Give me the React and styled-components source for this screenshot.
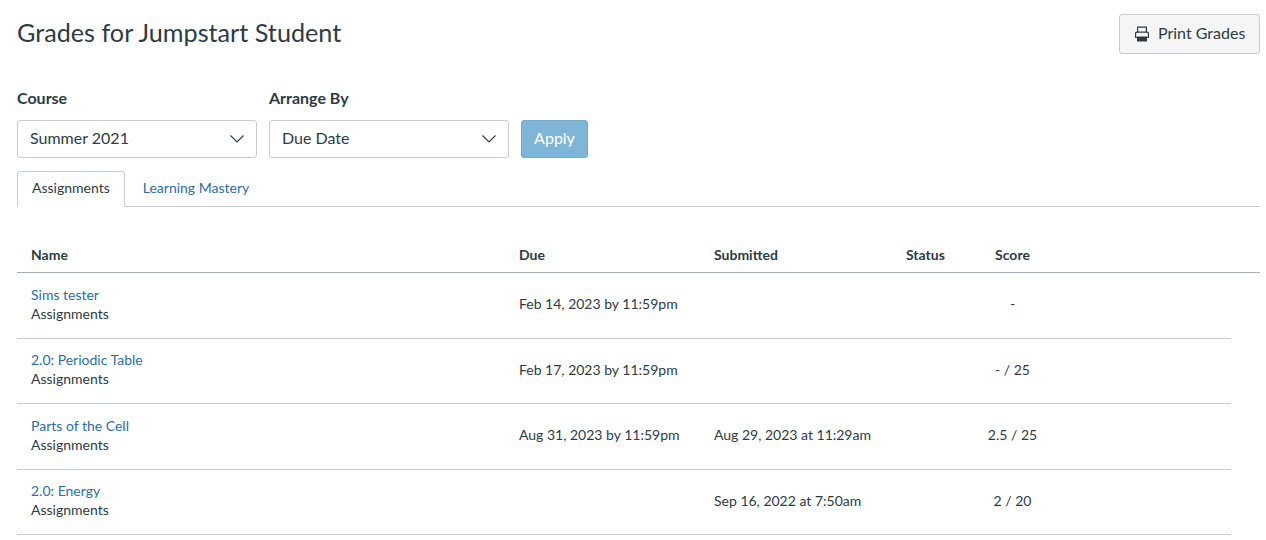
import React from 'react'
import styled, { createGlobalStyle } from 'styled-components'

const GlobalStyle = createGlobalStyle`
  html, body {
    margin: 0;
    padding: 0;
    background: #fff;
    font-family: Lato, "Liberation Sans", sans-serif;
    color: #2d3b45;
    overflow: hidden;
  }
`

const columns = '488px 195px 192px 89px 63px 1fr'

const Page = styled.div`
  width: 1266px;
  height: 540px;
  box-sizing: border-box;
  padding: 14px 6px 0 17px;
`
const Header = styled.header`
  display: flex;
  justify-content: space-between;
  align-items: flex-start;
  height: 74px;
`
const Title = styled.h1`
  margin: 0;
  font-size: 25.2px;
  line-height: 36px;
  font-weight: 400;
`
const PrintButton = styled.button`
  display: flex;
  align-items: center;
  gap: 9px;
  width: 141px;
  height: 40px;
  box-sizing: border-box;
  padding: 0 0 3px 15px;
  background: #f5f5f5;
  border: 1px solid #c7cdd1;
  border-radius: 3px;
  color: #2d3b45;
  font-family: inherit;
  font-size: 16px;
  svg {
    margin-top: 3px;
  }
`
const Filters = styled.form`
  display: flex;
  align-items: flex-end;
  gap: 12px;
`
const Field = styled.div`
  display: flex;
  flex-direction: column;
  gap: 13px;
`
const Label = styled.label`
  font-size: 16px;
  font-weight: 700;
  line-height: 19px;
  color: #2d3b45;
`
const Select = styled.div`
  display: flex;
  align-items: center;
  justify-content: space-between;
  width: 240px;
  height: 38px;
  box-sizing: border-box;
  padding: 0 12px 3px 12px;
  border: 1px solid #c7cdd1;
  border-radius: 3px;
  font-size: 16px;
  svg {
    margin-top: 2px;
  }
`
const ApplyButton = styled.button`
  width: 67px;
  height: 38px;
  background: #7fb5d6;
  border: 1px solid #78abcb;
  border-radius: 3px;
  color: #fff;
  font-family: inherit;
  font-size: 16px;
  padding: 0 0 3px;
`
const Tabs = styled.nav`
  display: flex;
  height: 35px;
  margin-top: 13px;
  border-bottom: 1px solid #c7cdd1;
`
const Tab = styled.a`
  display: flex;
  align-items: center;
  box-sizing: border-box;
  height: 36px;
  padding: 0 ${p => (p.$active ? '14px' : '17px')} 4px;
  font-size: 14px;
  color: ${p => (p.$active ? '#2d3b45' : '#2d6da8')};
  background: ${p => (p.$active ? '#fff' : 'transparent')};
  border: 1px solid ${p => (p.$active ? '#c7cdd1' : 'transparent')};
  border-bottom: ${p => (p.$active ? '1px solid #fff' : '0')};
  border-radius: 3px 3px 0 0;
`
const Table = styled.section`
  margin-top: 30px;
`
const HeadRow = styled.div`
  display: grid;
  grid-template-columns: ${columns};
  height: 36px;
  align-items: center;
  box-sizing: border-box;
  border-bottom: 1px solid #a5afb5;
  font-size: 14px;
  font-weight: 700;
`
const Row = styled.div`
  display: grid;
  grid-template-columns: ${columns};
  height: 65.5px;
  width: 1214px;
  align-items: center;
  box-sizing: border-box;
  padding-bottom: 3px;
  border-bottom: 1px solid #c7cdd1;
  font-size: 14px;
`
const Cell = styled.div`
  padding-left: 14px;
  white-space: nowrap;
`
const ScoreCell = styled.div`
  text-align: center;
  white-space: nowrap;
`
const NameLink = styled.a`
  display: block;
  color: #2d6da8;
  line-height: 19px;
`
const Context = styled.div`
  line-height: 19px;
`

const PrinterIcon = () => (
  <svg width="14" height="16" viewBox="0 0 14 16">
    <path d="M2.6 6.5V1.1h8.8v5.4" fill="none" stroke="#2d3b45" strokeWidth="1.2" />
    <path d="M1.8 6.1h10.4A1.2 1.2 0 0 1 13.4 7.3v4.2H.6V7.3A1.2 1.2 0 0 1 1.8 6.1z" fill="none" stroke="#2d3b45" strokeWidth="1.2" />
    <rect x="2" y="10.5" width="10" height="5" fill="#2d3b45" />
  </svg>
)

const SelectArrow = () => (
  <svg width="14" height="8" viewBox="0 0 14 8">
    <path d="M.5.5L7 7 13.5.5" fill="none" stroke="#2d3b45" strokeWidth="1.1" />
  </svg>
)

const assignments = [
  { name: 'Sims tester', due: 'Feb 14, 2023 by 11:59pm', submitted: '', score: '-' },
  { name: '2.0: Periodic Table', due: 'Feb 17, 2023 by 11:59pm', submitted: '', score: '- / 25' },
  { name: 'Parts of the Cell', due: 'Aug 31, 2023 by 11:59pm', submitted: 'Aug 29, 2023 at 11:29am', score: '2.5 / 25' },
  { name: '2.0: Energy', due: '', submitted: 'Sep 16, 2022 at 7:50am', score: '2 / 20' },
]

export default function App() {
  return (
    <Page>
      <GlobalStyle />
      <Header>
        <Title>Grades for Jumpstart Student</Title>
        <PrintButton>
          <PrinterIcon />
          Print Grades
        </PrintButton>
      </Header>
      <Filters>
        <Field>
          <Label>Course</Label>
          <Select>
            Summer 2021
            <SelectArrow />
          </Select>
        </Field>
        <Field>
          <Label>Arrange By</Label>
          <Select>
            Due Date
            <SelectArrow />
          </Select>
        </Field>
        <ApplyButton type="button">Apply</ApplyButton>
      </Filters>
      <Tabs>
        <Tab $active>Assignments</Tab>
        <Tab>Learning Mastery</Tab>
      </Tabs>
      <Table>
        <HeadRow>
          <Cell>Name</Cell>
          <Cell>Due</Cell>
          <Cell>Submitted</Cell>
          <Cell>Status</Cell>
          <ScoreCell>Score</ScoreCell>
        </HeadRow>
        {assignments.map(a => (
          <Row key={a.name}>
            <Cell>
              <NameLink>{a.name}</NameLink>
              <Context>Assignments</Context>
            </Cell>
            <Cell>{a.due}</Cell>
            <Cell>{a.submitted}</Cell>
            <Cell />
            <ScoreCell>{a.score}</ScoreCell>
          </Row>
        ))}
      </Table>
    </Page>
  )
}
